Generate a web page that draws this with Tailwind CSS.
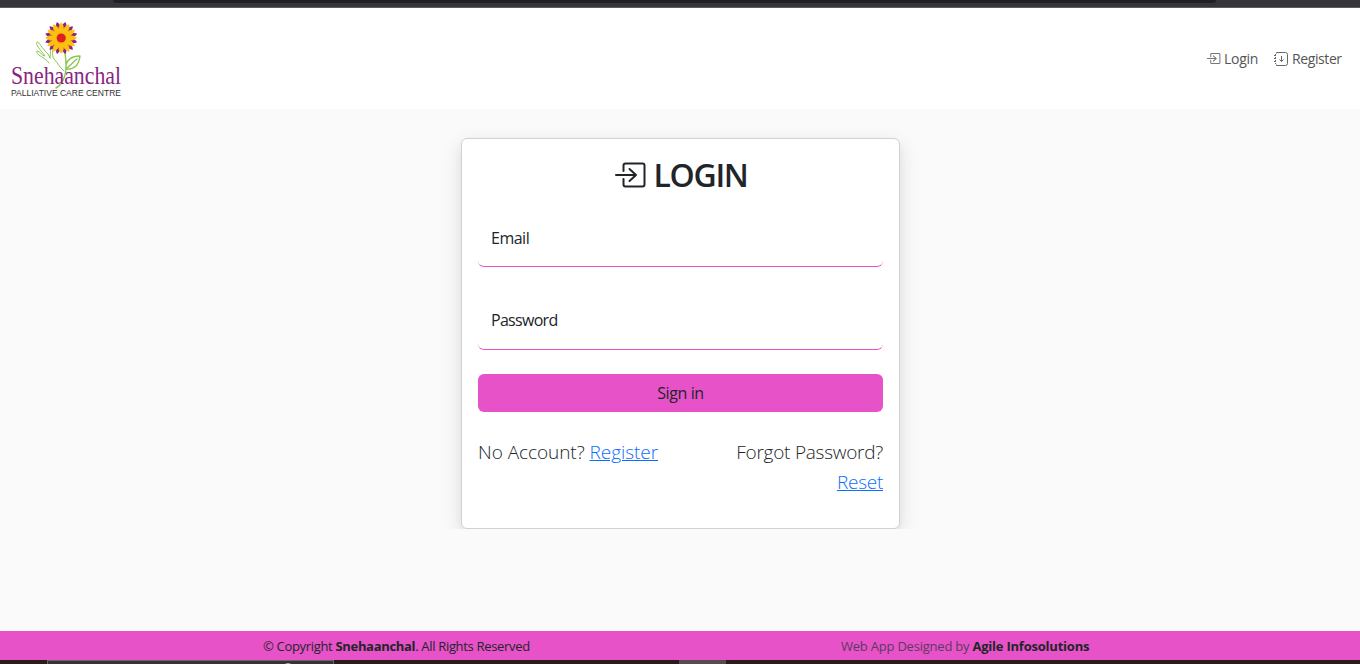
<!DOCTYPE html>
<html lang="en">
<head>
<meta charset="utf-8">
<title>Snehaanchal - Login</title>
<script src="https://cdn.jsdelivr.net/npm/@tailwindcss/browser@4"></script>
</head>
<body class="w-[1360px] h-[664px] overflow-hidden flex flex-col bg-[#fafafa] text-[#212529] font-['Segoe_UI','Open_Sans',sans-serif]">
<svg width="0" height="0" class="absolute">
  <defs>
    <g id="petal"><path d="M0 -5C-3 -8 -2.7 -12 0 -15C2.7 -12 3 -8 0 -5Z"/></g>
    <g id="enter" fill="none" stroke="currentColor" stroke-linecap="round" stroke-linejoin="round"><path d="M8.5 11V5.500q0-2 2-2h17q2 0 2 2v19q0 2-2 2h-17q-2 0-2-2V19M1 15h20M14.500 9l6.500 6-6.500 6"/></g>
  </defs>
</svg>
<div class="h-2 shrink-0 bg-[#35363a] border-b border-[#5c5c60] px-[113px]"><div class="h-[3px] w-[1103px] bg-[#202124] rounded-b-lg"></div></div>
<header class="h-[101px] shrink-0 bg-white flex items-center justify-between pr-[18px]">
  <svg width="130" height="95" viewBox="0 11 130 95" class="overflow-visible">
    <g fill="none" stroke="#8bc751" stroke-width="1" stroke-linecap="round" stroke-linejoin="round">
      <path stroke-width="1.4" d="M65 53C66 60 67 68 65 75S60 86 56 88M66 69C65 60 72 56 80 56C79 65 74 70 66 69C70 66 73 62 77 59"/>
      <path d="M49 63C45 57 35 55 37 51C40 51 42 56 45 56C41 50 35 45 37 42C39 41 42 49 48 54M48 54L50 58M50 58C51 52 50 46 52 46C54 49 51 55 54 59C58 63 59 67 64 71"/>
    </g>
    <g transform="translate(61.2 38)">
      <g fill="#8a2480" transform="rotate(15) scale(1.1)"><use href="#petal"/><use href="#petal" transform="rotate(30)"/><use href="#petal" transform="rotate(60)"/><use href="#petal" transform="rotate(90)"/><use href="#petal" transform="rotate(120)"/><use href="#petal" transform="rotate(150)"/><use href="#petal" transform="rotate(180)"/><use href="#petal" transform="rotate(210)"/><use href="#petal" transform="rotate(240)"/><use href="#petal" transform="rotate(270)"/><use href="#petal" transform="rotate(300)"/><use href="#petal" transform="rotate(330)"/></g>
      <g fill="#fdc010" stroke="#fdc010" stroke-width="0.7" transform="scale(1.02)"><circle r="9"/><use href="#petal"/><use href="#petal" transform="rotate(30)"/><use href="#petal" transform="rotate(60)"/><use href="#petal" transform="rotate(90)"/><use href="#petal" transform="rotate(120)"/><use href="#petal" transform="rotate(150)"/><use href="#petal" transform="rotate(180)"/><use href="#petal" transform="rotate(210)"/><use href="#petal" transform="rotate(240)"/><use href="#petal" transform="rotate(270)"/><use href="#petal" transform="rotate(300)"/><use href="#petal" transform="rotate(330)"/></g>
      <circle r="4.600" fill="#e02020"/>
    </g>
    <text x="11" y="84" textLength="110" lengthAdjust="spacingAndGlyphs" font-family="Liberation Serif, serif" font-size="25.5" fill="#8a2480">Snehaanchal</text>
    <text x="11" y="96" textLength="110" lengthAdjust="spacingAndGlyphs" font-family="Liberation Sans, sans-serif" font-size="9.5" fill="#333">PALLIATIVE CARE CENTRE</text>
  </svg>
  <nav class="flex items-center gap-4 text-[14px] text-[#555] leading-5 pt-px">
    <a class="flex items-center gap-[3px]"><svg width="14" height="14" viewBox="0 0 32 32" stroke-width="2.3" class="text-[#777]"><use href="#enter"/></svg><span class="w-[34px] whitespace-nowrap tracking-[-0.3px]">Login</span></a>
    <a class="flex items-center gap-1"><svg width="14" height="14" viewBox="0 0 14 14" fill="none" stroke="#666"><path d="M2.500 1.500v-1h9q2 0 2 2v9q0 2-2 2h-9v-1M7.500 4v5.500M5.500 7.500l2 2 2-2"/><path d="M1.500 2v10M0 3.500h3M0 6.500h3M0 9.500h3" stroke-dasharray="2 1"/></svg><span class="w-[50px] whitespace-nowrap tracking-[-0.4px]">Register</span></a>
  </nav>
</header>
<main class="h-[522px] shrink-0">
  <div class="h-[420px] overflow-hidden pt-[29px]">
    <section class="mx-auto w-[439px] h-[391px] border border-[#d1d1d1] rounded-md bg-white shadow-[0_4px_8px_rgba(0,0,0,0.03),0_6px_20px_rgba(0,0,0,0.12)] px-4 relative left-[0.5px]">
      <h1 class="flex h-[71px] mb-[2px] pl-px items-center justify-center gap-[7px] text-[32px] font-semibold"><svg width="32" height="32" viewBox="0 -1 32 32" stroke-width="2"><use href="#enter"/></svg><span class="w-[94px] whitespace-nowrap tracking-[-1.3px]">LOGIN</span></h1>
      <label class="flex h-[55px] items-center border-b border-[#e752c8] rounded-md px-[13px] pb-[2px] text-[16px] tracking-[-0.5px]">Email</label>
      <label class="mt-[28px] flex h-[55px] items-center border-b border-[#e752c8] rounded-md px-[13px] pb-[4px] text-[16px] tracking-[-0.7px]">Password</label>
      <button class="mt-6 w-full h-[38px] rounded-md bg-[#e752c8] text-[16px] tracking-[-0.4px] block">Sign in</button>
      <div class="mt-[25px] flex justify-between text-[19px] leading-[30px] font-light tracking-[-0.05px]">
        <p>No Account? <a class="text-[#0d6efd] underline">Register</a></p>
        <p class="text-right tracking-[-0.26px]">Forgot Password?<br><a class="text-[#0d6efd] underline">Reset</a></p>
      </div>
    </section>
  </div>
</main>
<footer class="h-[29px] shrink-0 bg-[#e752c8] flex items-center text-[13px] pl-[263px] pt-[2px] whitespace-nowrap">
  <p class="w-[578px] tracking-[-0.32px]">© Copyright <b>Snehaanchal</b>. All Rights Reserved</p>
  <p class="tracking-[-0.22px] text-[#5b3b5e]">Web App Designed by <b class="text-[#212529]">Agile Infosolutions</b></p>
</footer>
<div class="h-1 shrink-0 bg-[#2b1b1b] flex pl-[47px]"><div class="w-[287px] bg-[#3a3232] border border-b-0 border-[#666] flex justify-center pl-[195px]"><i class="block mt-[2px] w-2 h-1 rounded-t-full bg-[#aaa]"></i></div><div class="ml-[345px] w-[47px] bg-[#574c4c]"></div></div>
</body>
</html>
